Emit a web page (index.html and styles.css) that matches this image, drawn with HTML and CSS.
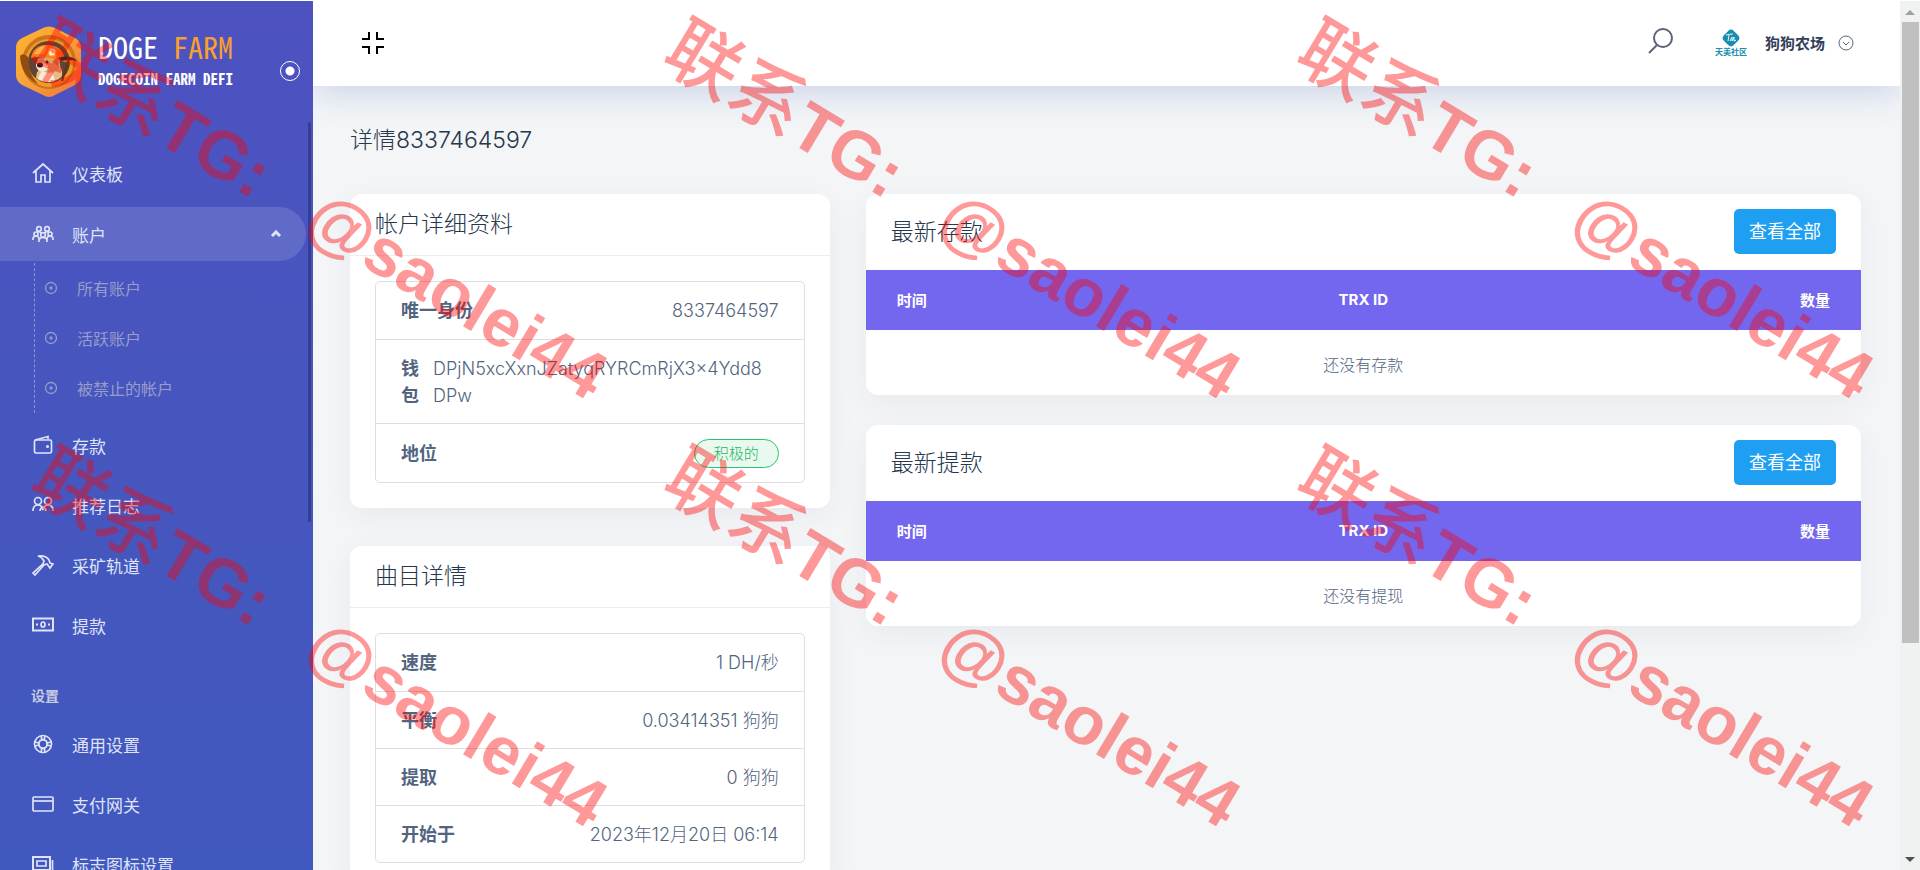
FILE: index.html
```
<!DOCTYPE html>
<html lang="zh">
<head>
    <meta charset="UTF-8">
    <meta name="viewport" content="width=device-width, initial-scale=1.0">
    <title>详情8337464597</title>
    <link rel="stylesheet" href="styles.css">
</head>
<body>
    <!-- 侧边栏 -->
    <aside class="sidebar">
        <div class="sidebar-head">
            <a href="#" class="logo">
                <svg class="logo-icon" width="66" height="72" viewBox="0 0 66 72">
                    <defs>
                        <linearGradient id="gold" x1="0" y1="0" x2="1" y2="1">
                            <stop offset="0" stop-color="#ffb52e"/>
                            <stop offset="0.5" stop-color="#f9a03a"/>
                            <stop offset="1" stop-color="#f2703c"/>
                        </linearGradient>
                    </defs>
                    <path d="M27 2q6-3 12 0l20 10q6 3 6 10v27q0 6-6 10L39 69q-6 4-12 0L6 59q-6-4-6-10V22q0-7 6-10z" fill="url(#gold)"/>
                    <circle cx="33" cy="36" r="27" fill="#c9761b"/>
                    <circle cx="33" cy="37" r="24" fill="#f39a24"/>
                    <circle cx="33" cy="36" r="21" fill="#5f4334"/>
                    <path d="M4 30q3-4 8 1 0 17 10 27Q5 50 4 30z" fill="#8f4d12"/>
                    <!-- 身体 -->
                    <path d="M20 52q0-8 7-10l14-6q6 6 5 14-3 5-13 6-8 0-13-4z" fill="#e3bd84"/>
                    <path d="M22 53q2-9 9-9 6 1 8 11-9 3-17-2z" fill="#f8ecd4"/>
                    <!-- 头 -->
                    <path d="M22 32q10-3 21 0 3 8-3 13-6 3-12 1-8-2-8-7 1-4 2-7z" fill="#d9a76a"/>
                    <path d="M20 38q3-3 8-1l4 3q0 5-5 6-7-1-7-8z" fill="#f7e8d2"/>
                    <ellipse cx="24" cy="39" rx="3" ry="2.500" fill="#1d1a1a"/>
                    <circle cx="31" cy="36" r="1.500" fill="#2b1b12"/>
                    <path d="M36 35l5-2 2 8z" fill="#b98048"/>
                    <!-- 头盔 -->
                    <path d="M15 32q2-13 16-13 15 0 18 14l5 2-1 2-11-3q-14-5-27-2z" fill="#ff7a1a"/>
                    <path d="M18 28q4-8 13-9l-3 9z" fill="#ffb347"/>
                    <circle cx="36" cy="26" r="4.500" fill="#ffa51f"/>
                    <path d="M34.500 23.500h1q3 0 3 2.500t-3 2.500h-1zM33.500 26h3" fill="none" stroke="#fff" stroke-width="1.500"/>
                    <!-- 镐 -->
                    <path d="M42 32q11-4 20 3-9-2-17 0z" fill="#3a2b25"/>
                    <path d="M53 33L46 55" stroke="#5e351b" stroke-width="2"/>
                </svg>
                <span class="logo-text">
                    <span class="logo-name">DOGE <em>FARM</em></span>
                    <span class="logo-sub">DOGECOIN FARM DEFI</span>
                </span>
            </a>
            <button class="pin" aria-label="固定菜单"></button>
        </div>

        <nav class="menu">
            <a href="#" class="menu-item">
                <svg class="icon" viewBox="0 0 22 22"><path d="M1 11L11 2l10 9M4 9v11h5v-7h4v7h5V9"/></svg>
                仪表板
            </a>
            <a href="#" class="menu-item active">
                <svg class="icon" viewBox="0 0 22 22"><circle cx="7" cy="6" r="2.300"/><circle cx="15" cy="6" r="2.300"/><circle cx="4" cy="11" r="2"/><circle cx="18" cy="11" r="2"/><circle cx="11" cy="12" r="2.300"/><path d="M1 17v-1q0-3 3-3t3 3v1M15 17v-1q0-3 3-3t3 3v1M7 19v-1q0-3.500 4-3.500t4 3.500v1M5 9q2-1.500 4 1M13 10q2-2.500 4-1"/></svg>
                账户
                <svg class="arrow" viewBox="0 0 12 8"><path d="M2 6l4-4 4 4"/></svg>
            </a>
            <div class="submenu">
                <a href="#"><svg class="dot" viewBox="0 0 14 14"><circle cx="7" cy="7" r="5.500"/><circle cx="7" cy="7" r="1"/></svg>所有账户</a>
                <a href="#"><svg class="dot" viewBox="0 0 14 14"><circle cx="7" cy="7" r="5.500"/><circle cx="7" cy="7" r="1"/></svg>活跃账户</a>
                <a href="#"><svg class="dot" viewBox="0 0 14 14"><circle cx="7" cy="7" r="5.500"/><circle cx="7" cy="7" r="1"/></svg>被禁止的帐户</a>
            </div>
            <a href="#" class="menu-item">
                <svg class="icon" viewBox="0 0 22 22"><rect x="2.500" y="6" width="17" height="13" rx="1.500"/><path d="M3 6l13-3.500V5"/><circle cx="15.500" cy="12.500" r="0.700"/></svg>
                存款
            </a>
            <a href="#" class="menu-item">
                <svg class="icon" viewBox="0 0 22 22"><circle cx="6" cy="7" r="3.500"/><circle cx="16" cy="7" r="3.500"/><path d="M1 17q0-6 5-6 4 0 5 5 1-5 5-5 5 0 5 6M8 17q0-3 3-4 3 1 3 4"/></svg>
                推荐日志
            </a>
            <a href="#" class="menu-item">
                <svg class="icon" viewBox="0 0 22 22"><path d="M6 2q8-1 11 4l1 3 3 1-3 4-3-4-3 1-9 10-2-2 10-9 1-3q-2-4-6-5z"/></svg>
                采矿轨道
            </a>
            <a href="#" class="menu-item">
                <svg class="icon" viewBox="0 0 22 22"><path d="M1 4.500h20v12H1z" stroke-width="2"/><ellipse cx="11" cy="10.500" rx="2" ry="2.500"/><path d="M4 10.500h2M16 10.500h2" stroke-width="2"/></svg>
                提款
            </a>
            <h2 class="menu-title">设置</h2>
            <a href="#" class="menu-item">
                <svg class="icon" viewBox="0 0 22 22"><circle cx="11" cy="11" r="8.500"/><circle cx="11" cy="11" r="4.200" stroke-width="2"/><path d="M9 3l1 4M13 3l-1 4M9 19l1-4M13 19l-1-4M3 9l4 1M3 13l4-1M19 9l-4 1M19 13l-4-1"/></svg>
                通用设置
            </a>
            <a href="#" class="menu-item">
                <svg class="icon" viewBox="0 0 22 22"><rect x="1" y="4" width="20" height="14" rx="1"/><path d="M1 8h20"/></svg>
                支付网关
            </a>
            <a href="#" class="menu-item">
                <svg class="icon" viewBox="0 0 22 22"><path d="M1 4h17v13H1z" stroke-width="2"/><path d="M5 8h9v5H5zM20.500 7v13H4"/></svg>
                标志图标设置
            </a>
        </nav>
        <div class="sidebar-bar"></div>
    </aside>

    <div class="main">
        <header class="topbar">
            <button class="compress" aria-label="退出全屏">
                <svg width="24" height="24" viewBox="0 0 24 24"><path d="M1 8h7V1M16 1v7h7M1 16h7v7M16 23v-7h7"/></svg>
            </button>
            <div class="topbar-right">
                <button class="search" aria-label="搜索">
                    <svg width="26" height="26" viewBox="0 0 26 26"><circle cx="16" cy="10" r="9"/><path d="M10 17l-8 8"/></svg>
                </button>
                <button class="user">
                    <span class="avatar">
                        <svg width="18" height="18" viewBox="0 0 18 18"><rect x="2" y="2" width="14" height="14" rx="4" transform="rotate(45 9 9)" fill="#1a8caf"/><path d="M4 6q4-1 7-1M7 6l-1 6M8 12l2-4v4l2-4v4q1 0 2-1" fill="none" stroke="#e6f5fa"/></svg>
                        <small>天美社区</small>
                    </span>
                    <span class="user-name">狗狗农场</span>
                    <svg width="16" height="16" viewBox="0 0 16 16"><circle cx="8" cy="8" r="7"/><path d="M5 7l3 3 3-3"/></svg>
                </button>
            </div>
        </header>

        <main class="content">
            <h1 class="page-title">详情8337464597</h1>

            <div class="row">
                <div class="col-4">
                    <section class="card">
                        <div class="card-header"><h3>帐户详细资料</h3></div>
                        <div class="card-body">
                            <ul class="list">
                                <li><b>唯一身份</b><span>8337464597</span></li>
                                <li class="wallet"><b>钱包</b><span>DPjN5xcXxnJZatyqRYRCmRjX3x4Ydd8<wbr>DPw</span></li>
                                <li><b>地位</b><span class="badge">积极的</span></li>
                            </ul>
                        </div>
                    </section>

                    <section class="card">
                        <div class="card-header"><h3>曲目详情</h3></div>
                        <div class="card-body">
                            <ul class="list">
                                <li><b>速度</b><span>1 DH/秒</span></li>
                                <li><b>平衡</b><span>0.03414351 狗狗</span></li>
                                <li><b>提取</b><span>0 狗狗</span></li>
                                <li><b>开始于</b><span>2023年12月20日 06:14</span></li>
                            </ul>
                        </div>
                    </section>
                </div>

                <div class="col-8">
                    <section class="card">
                        <div class="card-top">
                            <h3>最新存款</h3>
                            <a href="#" class="btn">查看全部</a>
                        </div>
                        <table>
                            <thead>
                                <tr><th>时间</th><th>TRX ID</th><th>数量</th></tr>
                            </thead>
                            <tbody>
                                <tr><td colspan="3">还没有存款</td></tr>
                            </tbody>
                        </table>
                    </section>

                    <section class="card">
                        <div class="card-top">
                            <h3>最新提款</h3>
                            <a href="#" class="btn">查看全部</a>
                        </div>
                        <table>
                            <thead>
                                <tr><th>时间</th><th>TRX ID</th><th>数量</th></tr>
                            </thead>
                            <tbody>
                                <tr><td colspan="3">还没有提现</td></tr>
                            </tbody>
                        </table>
                    </section>
                </div>
            </div>
        </main>
    </div>

    <!-- 页面滚动条 -->
    <div class="scrollbar">
        <i class="up"></i>
        <div class="track"><div class="thumb"></div></div>
        <i class="down"></i>
    </div>

    <!-- 水印 -->
    <div class="watermark">
        <span><b>联系</b>TG:&nbsp;&nbsp; @saolei44</span>
        <span><b>联系</b>TG:&nbsp;&nbsp; @saolei44</span>
        <span><b>联系</b>TG:&nbsp;&nbsp; @saolei44</span>
        <span><b>联系</b>TG:&nbsp;&nbsp; @saolei44</span>
        <span><b>联系</b>TG:&nbsp;&nbsp; @saolei44</span>
        <span><b>联系</b>TG:&nbsp;&nbsp; @saolei44</span>
    </div>
</body>
</html>
```
FILE: styles.css
```
* {
    box-sizing: border-box;
}
body {
    margin: 0;
    height: 100vh;
    display: flex;
    overflow: hidden;
    border-top: 1px solid #fff;
    background: #f3f5f7;
    color: #52657f;
    font-family: Inter, "Noto Sans CJK SC", sans-serif;
    font-size: 17px;
    font-weight: 300;
}
a {
    color: inherit;
    text-decoration: none;
}
button {
    padding: 0;
    border: none;
    background: none;
    font: inherit;
    cursor: pointer;
}
svg {
    flex-shrink: 0;
}

/* 侧边栏 */
.sidebar {
    position: relative;
    flex: 0 0 313px;
    overflow: hidden;
    background: linear-gradient(to bottom, #4d52c0, #4557bf 60%, #4158bf);
    color: #dfe3f7;
}
.sidebar-head {
    display: flex;
    align-items: center;
    justify-content: space-between;
    padding: 25px 13px 0 16px;
}
.logo {
    display: flex;
    gap: 16px;
}
.logo-text {
    display: flex;
    flex-direction: column;
    padding-top: 1px;
    color: #fff;
    font-family: "Noto Sans Mono CJK SC", "Noto Sans CJK SC", monospace;
    font-feature-settings: "hwid";
    white-space: pre;
}
.logo-name {
    font-size: 30px;
    line-height: 38px;
    font-weight: 500;
}
.logo-name em {
    color: #f99f2d;
    font-style: normal;
}
.logo-sub {
    font-size: 15px;
    line-height: 28px;
    font-weight: 700;
}
.pin {
    width: 20px;
    height: 20px;
    margin-top: 18px;
    border: 1px solid #fff;
    border-radius: 50%;
    background: radial-gradient(circle, #fff 4px, transparent 5px);
}
.menu {
    padding-top: 48px;
}
.menu-item {
    display: flex;
    align-items: center;
    height: 54px;
    margin: 0 7px 6px 0;
    padding: 0 24px 0 32px;
    border-radius: 0 27px 27px 0;
    font-weight: 400;
}
.menu-item.active {
    margin-top: 7px;
    margin-bottom: 0;
    background: rgba(255,255,255,0.13);
}
.icon {
    width: 22px;
    height: 22px;
    margin-right: 18px;
    fill: none;
    stroke: currentColor;
    stroke-width: 1.7;
}
.arrow {
    width: 12px;
    height: 8px;
    margin-left: auto;
    fill: none;
    stroke: currentColor;
    stroke-width: 3;
}
.submenu {
    margin: 2px 0 5px 34px;
    border-left: 1px dashed #8c93d6;
}
.submenu a {
    display: flex;
    align-items: center;
    height: 50px;
    padding-left: 9px;
    color: #989cca;
    font-size: 16px;
    font-weight: 400;
}
.dot {
    width: 14px;
    height: 14px;
    margin-right: 19px;
    fill: none;
    stroke: currentColor;
    stroke-width: 1.3;
}
.menu-title {
    margin: 32px 0 9px 31px;
    color: #c7cbe0;
    font-size: 14px;
    line-height: 24px;
    font-weight: 700;
}
.sidebar-bar {
    position: absolute;
    top: 121px;
    right: 2px;
    width: 3px;
    height: 46%;
    border-radius: 3px;
    background: #353f92;
}

/* 顶部栏 */
.main {
    flex: 1;
    min-width: 0;
    overflow: hidden;
}
.topbar {
    display: flex;
    align-items: center;
    justify-content: space-between;
    height: 85px;
    padding: 0 46px 2px 48px;
    background: #fff;
    box-shadow: 0 6px 34px rgba(83,109,187,0.26);
}
.topbar svg {
    fill: none;
    stroke: #5b6478;
}
.compress svg {
    display: block;
    stroke: #000;
    stroke-width: 2;
}
.topbar-right, .user {
    display: flex;
    align-items: center;
}
.search {
    margin: 0 40px 3px 0;
}
.search svg {
    display: block;
    stroke-width: 2;
}
.user {
    gap: 13px;
}
.avatar {
    display: flex;
    flex-direction: column;
    align-items: center;
    width: 36px;
}
.avatar small {
    color: #1a8caf;
    font-size: 8px;
    line-height: 10px;
    font-weight: 700;
}
.topbar .avatar svg {
    stroke: none;
}
.user-name {
    margin-left: 3px;
    color: #34405a;
    font-size: 15px;
    font-weight: 700;
}

/* 内容 */
.content {
    padding: 39px 39px 0 37px;
}
h1, h3 {
    margin: 0;
    color: #26364c;
    font-size: 23px;
    line-height: 30px;
    font-weight: 300;
}
.page-title {
    margin-bottom: 39px;
    font-weight: 300;
}
.row {
    display: flex;
    margin: 0 -18px;
}
.col-4, .col-8 {
    display: flex;
    flex-direction: column;
    padding: 0 18px;
}
.col-4 {
    width: 33.3333%;
    gap: 38px;
}
.col-8 {
    width: 66.6667%;
    gap: 30px;
}
.card {
    border-radius: 12px;
    background: #fff;
    box-shadow: 0 8px 30px rgba(50,60,100,0.06);
}
.card-header {
    padding: 15px 25px 16px;
    border-bottom: 1px solid #ebedf0;
}
.card-body {
    padding: 25px;
}
.card-top {
    display: flex;
    align-items: center;
    justify-content: space-between;
    padding: 15px 25px 16px;
}
.list {
    margin: 0;
    padding: 0;
    list-style: none;
    border: 1px solid #dcdee2;
    border-radius: 5px;
    font-size: 18px;
}
.list li {
    display: flex;
    align-items: center;
    justify-content: space-between;
    padding: 15px 25px 14px;
    line-height: 27px;
}
.list li:first-child {
    padding-bottom: 15px;
}
.list li + li {
    border-top: 1px solid #dcdee2;
}
.list b {
    font-weight: 700;
}
.list .wallet {
    justify-content: flex-start;
    gap: 14px;
}
.wallet b {
    flex: 0 0 18px;
}
.badge {
    padding: 0 19px;
    border: 1px solid #28c76f;
    border-radius: 15px;
    background: #e9f9f0;
    color: #28b765;
    font-size: 15px;
}
.btn {
    padding: 0 15px;
    border-radius: 5px;
    background: #1e9ff2;
    color: #fff;
    font-size: 18px;
    line-height: 45px;
    font-weight: 400;
}
table {
    width: 100%;
    border-collapse: collapse;
    table-layout: fixed;
    text-align: center;
}
th {
    height: 60px;
    padding: 0 31px 2px;
    background: #7367f0;
    color: #fff;
    font-size: 15px;
    font-weight: 700;
}
th:first-child {
    text-align: left;
}
th:last-child {
    text-align: right;
}
td {
    height: 65px;
    padding: 2px 31px 0;
    font-size: 16px;
}

/* 滚动条 */
.scrollbar {
    display: flex;
    flex-direction: column;
    align-items: center;
    flex: 0 0 20px;
    padding: 9px 1px 8px;
    background: #f0f1f1;
}
.track {
    flex: 1;
    width: 17px;
    margin: 7px 0;
}
.thumb {
    height: 75%;
    background: #c0c0c0;
}
.up, .down {
    border: 5px solid transparent;
    border-top-width: 0;
    border-bottom-color: #a0a0a0;
}
.down {
    border-width: 5px 5px 0;
    border-top-color: #505050;
}

/* 水印 */
.watermark {
    position: fixed;
    inset: 0;
    display: grid;
    grid-template-columns: repeat(3, 633px);
    grid-auto-rows: 428px;
    padding: 7px 0 0 60px;
    overflow: hidden;
    pointer-events: none;
    color: rgba(255,0,0,0.4);
    font-family: "Liberation Sans", "Noto Sans CJK SC", sans-serif;
    font-size: 68px;
    line-height: 82px;
    font-weight: 700;
    white-space: nowrap;
}
.watermark span {
    transform: rotate(31deg);
    transform-origin: 0 0;
}
.watermark b {
    font-size: 74px;
    font-weight: 500;
}
```
